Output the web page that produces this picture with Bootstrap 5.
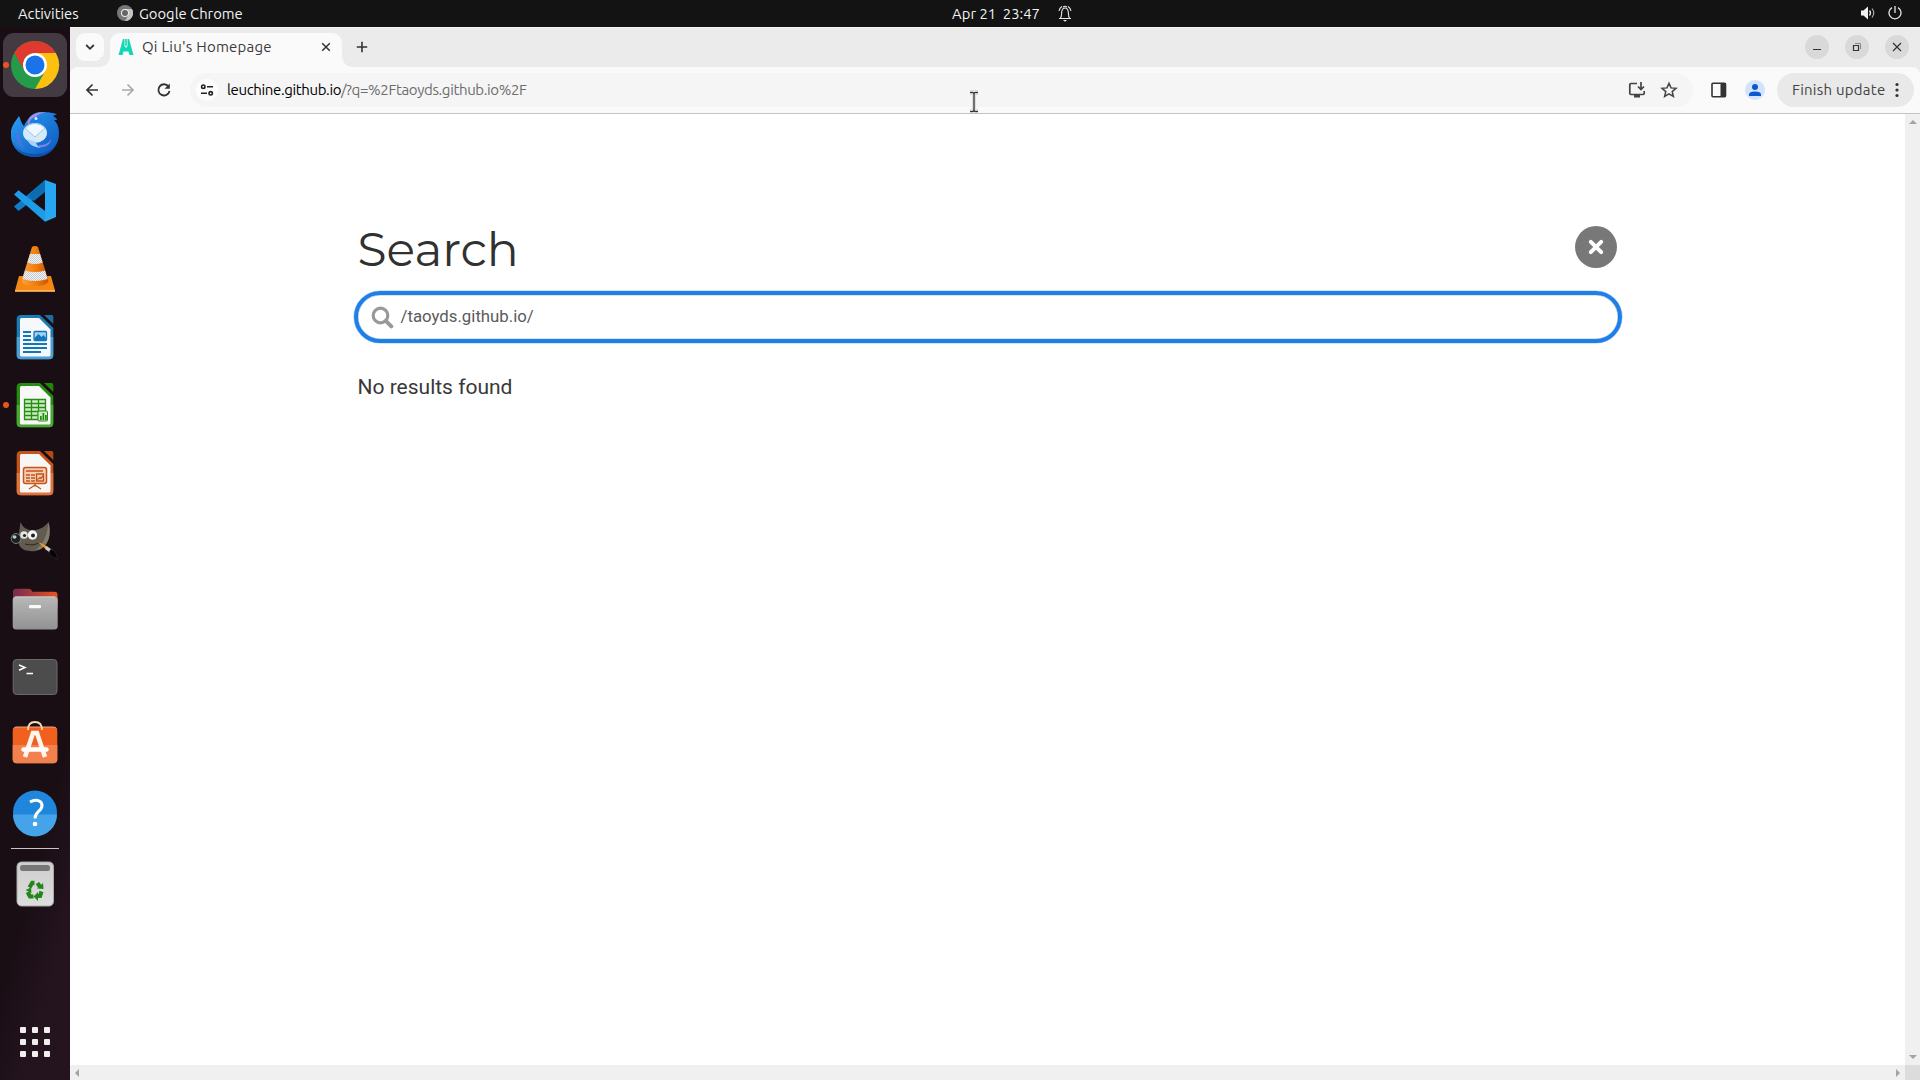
<!DOCTYPE html>
<html lang="en">
<head>
<meta charset="utf-8">
<meta name="viewport" content="width=device-width, initial-scale=1">
<title>Qi Liu's Homepage</title>
<link href="https://cdn.jsdelivr.net/npm/bootstrap@5.3.0/dist/css/bootstrap.min.css" rel="stylesheet">
<style>
body{width:1920px;height:1080px;overflow:hidden;background:#fff;font-family:Ubuntu,"Noto Sans",sans-serif;font-size:15px;line-height:1}
svg{display:block;flex:none}
.topbar{height:27px;background:#131313;color:#f2f2f2;padding:0 18px 1px 18px;font-size:14.8px}
.topbar>div{flex:1 1 0}
.topbar span{padding-top:2px}
.t-act{width:95px}
.t-app{margin-left:6px}
.clock{padding-left:104px;gap:18px}
.t-clock{white-space:pre}
.dock{width:70px;background:linear-gradient(105deg,#1a0e15 0 74%,#24141e 88%);padding-top:6px;position:relative}
.tile{width:64px;height:64px;margin-bottom:4px;border-radius:11px;position:relative}
.tile.on{background:#443a41}
.run::before{content:"";position:absolute;left:0;top:29px;width:6px;height:6px;border-radius:50%;background:#e95420}
.sep{width:48px;height:1px;background:#c9c5c7;margin-top:-1px;margin-bottom:3px}
.apps{margin-top:107px}
.strip{height:40px;background:#ebebeb;padding:5px 11px 0 6px;border-top:1px solid #f6f6f6}
.tabsearch{width:28px;height:28px;border-radius:9px;background:#fafafa;margin-right:6px}
.tab{width:232px;height:34px;background:#fafafa;border-radius:10px 10px 0 0;padding:0 11px 6px 8px;color:#3c3c3c;position:relative}
.tab::before,.tab::after{content:"";position:absolute;bottom:0;width:10px;height:10px}
.tab::before{left:-10px;background:radial-gradient(circle at 0 0,#ebebeb 9.5px,#fafafa 10px)}
.tab::after{right:-10px;background:radial-gradient(circle at 100% 0,#ebebeb 9.5px,#fafafa 10px)}
.t-tab{margin-left:8px;letter-spacing:.23px;padding-bottom:2px}
.winbtns{gap:16px;margin-top:2px}
.winbtn{width:24px;height:24px;border-radius:50%;background:#d9d9d9}
.barwrap{background:#ebebeb}
.bar{height:47px;background:#fafafa;border-bottom:1px solid #c4c4c4;border-radius:8px 8px 0 0;padding:6px 6px 6px 10px}
.ib{width:24px;height:24px}
.omni{width:1503px;height:34px;border-radius:17px;background:#f5f5f5;padding:0 15px 0 6px}
.tune{width:22px;height:22px;border-radius:50%;background:#fdfdfd}
.url{color:#6d6d6d;margin-left:9px;letter-spacing:-.36px;padding-bottom:2px}
.url b{font-weight:400;color:#000}
.upd{width:137px;height:34px;border-radius:17px;background:#e9e9e9;color:#444;padding:0 12px 0 15px}
.t-upd{letter-spacing:.25px;padding-bottom:1px}
.page{font-family:Roboto,sans-serif;color:#383838}
.inner{width:1260px;margin:0 auto;padding-top:107px}
.inner h1{font-family:Montserrat,Inter,sans-serif;font-weight:400;font-size:47.25px;line-height:56px;margin:0;color:#313131}
.closebtn{width:42px;height:42px;border-radius:50%;background:#787878;margin:5px .5px 0 0}
.searchbox{width:1268px;height:52px;margin:14px -4px 0 -4px;border:4px solid #1f7fe8;border-radius:26px;box-shadow:0 0 0 .6px #a9cef6,inset 0 0 0 .6px #b9c7d6;font-size:16.8px;color:#5a5a5a;padding-left:13px}
.query{margin-left:7px;padding-bottom:2px}
.none{font-size:21px;line-height:24px;margin:32px 0 0}
.vs{width:15px;background:#f0f0f0}
.hs{height:15px;background:#f0f0f0}
.corner{width:15px;height:15px;background:#dcdcdc}
.cursor{position:absolute;left:968px;top:90px}
</style>
<script src="https://cdn.jsdelivr.net/npm/bootstrap@5.3.0/dist/js/bootstrap.bundle.min.js"></script>
</head>
<body class="d-flex flex-column">
<header class="topbar d-flex align-items-center">
  <div class="d-flex align-items-center">
    <span class="t-act">Activities</span>
    <svg class="ms-1" width="16" height="16" viewBox="0 0 16 16"><circle cx="8" cy="8" r="8" fill="#777"/><path d="M8 4h7A8 8 0 0 1 8 16l3.500-6z" fill="#c4c4c4"/><circle cx="8" cy="8" r="4" fill="#eee"/><circle cx="8" cy="8" r="3" fill="#666"/></svg>
    <span class="t-app">Google Chrome</span>
  </div>
  <div class="d-flex align-items-center justify-content-center clock">
    <span class="t-clock">Apr 21  23:47</span>
    <svg width="14" height="17" viewBox="0 0 14 17" fill="none" stroke="#e8e8e8" stroke-width="1.100"><path d="M1 13.500h12M2.500 13c1.500-2 .8-4 1.300-6.500C4.200 4.300 5.500 3 7 3s2.800 1.300 3.200 3.500c.5 2.500-.2 4.500 1.300 6.500M1 6c.3-2 1.500-3.700 3-4.500M13 6c-.3-2-1.500-3.700-3-4.500M5 2.200c1.200-1.200 2.800-1.200 4 0"/><path d="M5 15h4l-2 1.800z" fill="#eee" stroke="none"/></svg>
  </div>
  <div class="d-flex align-items-center justify-content-end">
    <svg class="me-2" width="16" height="16" viewBox="0 0 16 16" fill="none" stroke="#eee"><path d="M1 5.500h2.500L8 1.500v13l-4.500-4H1z" fill="#f2f2f2" stroke="none"/><path d="M9.500 5.500q2 2.500 0 5" stroke-width="1.300"/><path d="M12 3.500q3.500 4.500 0 9" stroke="#aaa" stroke-width="1.200"/></svg>
    <svg class="ms-1" width="14" height="14" viewBox="0 0 14 14" fill="none" stroke="#e8e8e8" stroke-width="1.300"><path d="M4 1.600a6 6 0 1 0 6 0M7 0v7"/></svg>
  </div>
</header>
<main class="d-flex flex-grow-1">
  <nav class="dock d-flex flex-column align-items-center flex-shrink-0">
    <svg width="0" height="0" class="position-absolute"><defs>
      <linearGradient id="tb" x2="1" y2="1"><stop stop-color="#2aa0f5"/><stop offset="1" stop-color="#0d55bd"/></linearGradient>
      <linearGradient id="cone"><stop stop-color="#f9a13a"/><stop offset=".5" stop-color="#f38010"/><stop offset="1" stop-color="#c95500"/></linearGradient>
      <linearGradient id="grey" x2="0" y2="1"><stop stop-color="#b8b8b8"/><stop offset="1" stop-color="#929292"/></linearGradient>
      <linearGradient id="fold"><stop stop-color="#762a50"/><stop offset="1" stop-color="#e95420"/></linearGradient>
      <linearGradient id="bin" x2="0" y2="1"><stop stop-color="#cecece"/><stop offset="1" stop-color="#dedede"/></linearGradient>
      <pattern id="chk" width="2" height="2" patternUnits="userSpaceOnUse"><path d="M0 0h2v2H0z" fill="#f3f3f3"/><path d="M0 0h1v1H0zM1 1h1v1H1z" fill="#c5c9cc"/></pattern>
    </defs></svg>
    <div class="tile on run"><svg width="64" height="64"><circle cx="32" cy="32" r="24" fill="#259b4a"/><path d="M32 20h20.800A24 24 0 0 1 32 56l10.400-18z" fill="#fcc010"/><path d="M11.200 20A24 24 0 0 1 52.800 20H32a12 12 0 0 0-10.400 18z" fill="#e0392d"/><circle cx="32" cy="32" r="12" fill="#fff"/><circle cx="32" cy="32" r="9.500" fill="#1a73e8"/></svg></div>
    <div class="tile"><svg width="64" height="64"><path d="M8 30c1-6 4-9 8-15 2 4 2 7 5 10 4-8 8-14 18-14 7 0 11 1 15 2l-4 2c2 1 4 3 4 4l-3 0c4 4 5 8 5 14 0 13-11 23-24 23C18 56 8 47 8 34z" fill="url(#tb)"/><path d="M10 38c1 10 10 15 22 15 10 0 19-4 22-12-3 10-12 15-22 15-13 0-21-8-22-18z" fill="#0a4aa5" opacity=".7"/><path d="M25 24c-2-7 8-15 18-12-6 0-9 2-11 5-2 4-4 5-7 7z" fill="#a98ee8"/><path d="M27 20c3-5 11-6 15 0l-7 7-9-2z" fill="#1c7ee0"/><circle cx="33" cy="17.500" r="1.500" fill="#dcecff"/><path d="M15 28c-3 8-1 16 6 20-3-7-5-12-6-20z" fill="#5a6fe0" opacity=".8"/><path d="M36 44c6 0 10-2 12-6 0 5-5 9-12 8z" fill="#7b82e8"/><ellipse cx="32" cy="32" rx="12" ry="10" fill="#d3e9fc"/><path d="M24 38c2 6 7 8 14 9-4-2-5-4-5-6z" fill="#a9d2fa"/><path d="M22 27l10 9 10-9q-4-4.500-10-4.500T22 27z" fill="#f0f8ff" stroke="#a5c4e0" stroke-width="1"/></svg></div>
    <div class="tile"><svg width="64" height="64"><path d="M11 37.500L15.500 42 42 22V11z" fill="#0f7cc5"/><path d="M11 25.500L15.500 21.300 42 42v10.700z" fill="#1f9ce8"/><path d="M42 11l11 4v33l-11 4.700z" fill="#27a7f2"/><path d="M42 11v12L31 32l-6-5z" fill="#0a6cb1"/></svg></div>
    <div class="tile"><svg width="64" height="64"><path d="M16 39h32l4 14.500q0 1-1 1H13q-1 0-1-1z" fill="#f58713"/><path d="M12 53h40v1.700H12z" fill="#ffb258"/><path d="M29 10q3-2 6 0l10.500 34q-1 5-13.500 5t-13.500-5z" fill="url(#cone)"/><path d="M27 17h10l2.700 8.500q-7.700 3-15.400 0z" fill="url(#chk)"/><path d="M22 33.500q10 3 20 0l2.500 8.500q-12.500 4-25 0z" fill="url(#chk)"/></svg></div>
    <div class="tile"><svg width="64" height="64"><path d="M41 10h7.500q1.800 0 1.800 1.800V19z" fill="#1c6fa3"/><path d="M18 10h19l13.300 13v27q0 4.300-4.300 4.300H18q-4.300 0-4.300-4.300V14.300Q13.700 10 18 10z" fill="#1b7bb5"/><path d="M13.700 32h36.600v18q0 4.300-4.300 4.300H18q-4.300 0-4.300-4.300z" fill="#4b9fd2"/><path d="M18.500 13H36l11.500 11.500V50q0 1.500-1.500 1.500H18.500q-1.500 0-1.500-1.500V14.500q0-1.500 1.500-1.500z" fill="#f7f8f9"/><path d="M20 27h8M20 31h8M20 35h8M20 39h24M20 43h24M20 47h18" stroke="#1177bb" stroke-width="1.800"/><rect x="31" y="26.500" width="12.500" height="9" rx="1" fill="#9ed2f2" stroke="#1177bb" stroke-width="1.300"/><path d="M31.500 35v-2l4-4 3 3 2-2 2.500 3v2z" fill="#1177bb"/></svg></div>
    <div class="tile run"><svg width="64" height="64"><path d="M41 10h7.500q1.800 0 1.800 1.800V19z" fill="#20860b"/><path d="M18 10h19l13.300 13v27q0 4.300-4.300 4.300H18q-4.300 0-4.300-4.300V14.300Q13.700 10 18 10z" fill="#268c12"/><path d="M13.700 32h36.600v18q0 4.300-4.300 4.300H18q-4.300 0-4.300-4.300z" fill="#48a832"/><path d="M18.500 13H36l11.500 11.500V50q0 1.500-1.500 1.500H18.500q-1.500 0-1.500-1.500V14.500q0-1.500 1.500-1.500z" fill="#f7f8f7"/><path d="M21.500 26.500h21v20h-21zM21.500 30.500h21M21.500 34.500h21M21.500 38.500h21M21.500 42.500h21M28.500 26.500v20M35.500 26.500v20" fill="#c9ecc0" stroke="#268c12" stroke-width="1.300"/><rect x="35" y="38" width="9.500" height="10" rx="1" fill="#c9ecc0" stroke="#268c12"/><path d="M37 47v-4h1.700v4zm2.500 0v-7h1.700v7zm2.500 0v-5h1.700v5z" fill="#268c12"/></svg></div>
    <div class="tile"><svg width="64" height="64"><path d="M41 10h7.500q1.800 0 1.800 1.800V19z" fill="#b84a12"/><path d="M18 10h19l13.300 13v27q0 4.300-4.300 4.300H18q-4.300 0-4.300-4.300V14.300Q13.700 10 18 10z" fill="#c4541a"/><path d="M13.700 32h36.600v18q0 4.300-4.300 4.300H18q-4.300 0-4.300-4.300z" fill="#dc7440"/><path d="M18.500 13H36l11.500 11.500V50q0 1.500-1.500 1.500H18.500q-1.500 0-1.500-1.500V14.500q0-1.500 1.500-1.500z" fill="#f8f6f5"/><rect x="20.500" y="26.500" width="23" height="16" rx="2" fill="#f5cdb5" stroke="#c4541a" stroke-width="1.500"/><path d="M23 30h17M23 34h4M23 37h4M23 40h4M28 34h4M28 37h4M28 40h4" stroke="#c4541a" stroke-width="1.700"/><path d="M33.500 33h7v7h-7zM34.500 38.500l2.500-2 1 1 2-3M32 43v2.500M32 44l-6 4M32 44l6 4" fill="none" stroke="#c4541a" stroke-width="1.300"/></svg></div>
    <div class="tile"><svg width="64" height="64"><path d="M17.500 13c2 5 5 7 9 8 6 1 14-1 19-8 2 8 2 18-4 24-5 6-14 6-20 4-5-2-7-7-6-13z" fill="#625c50"/><path d="M45.500 13c2 8 2 18-4 24-3 3-6 4-9 4 8-6 12-15 13-28z" fill="#837c6d"/><ellipse cx="13" cy="29.500" rx="4.800" ry="5" fill="#1c1f20" stroke="#8b9596" stroke-width=".8"/><ellipse cx="11.500" cy="28" rx="2" ry="1.800" fill="#b9c9c9"/><circle cx="21" cy="26" r="3.800" fill="#e4e4e4"/><circle cx="29.500" cy="26" r="4.700" fill="#f5f5f5"/><circle cx="21.500" cy="26.500" r="1.600" fill="#222"/><circle cx="30" cy="26.500" r="2" fill="#222"/><path d="M22 35q9 2.500 15-2" stroke="#2a2722" fill="none"/><path d="M34.500 32.500l10 5-1.500 3z" fill="#f09a28"/><path d="M43.500 37l6 4-2 3-5.500-4z" fill="#ccc"/><path d="M48 40c3 1 6 4 6.500 10-4-1-8-3-8.500-7z" fill="#050505" stroke="#3a3638" stroke-width=".5"/></svg></div>
    <div class="tile"><svg width="64" height="64"><path d="M10 15q0-3.300 3-3.300h13q1.500 0 2.500 1.500l1 1.500h22q3 0 3 3V30H10z" fill="url(#fold)"/><rect x="9.700" y="19.500" width="45" height="33" rx="3.500" fill="url(#grey)"/><path d="M12 20h40" stroke="#ccc"/><rect x="26" y="28" width="12" height="3.200" rx="1" fill="#fafafa"/></svg></div>
    <div class="tile"><svg width="64" height="64"><rect x="10.200" y="14.500" width="43.800" height="35" rx="3.500" fill="#4c4c4c" stroke="#6a6a6a"/><path d="M16 20l6 2.500-6 2.800M23.500 28.500H30" fill="none" stroke="#fff" stroke-width="1.500"/></svg></div>
    <div class="tile"><svg width="64" height="64"><rect x="9.700" y="14" width="44.600" height="36.300" rx="4" fill="#f2601f"/><path d="M9.700 32h44.600v14.300q0 4-4 4H13.700q-4 0-4-4z" fill="#f2814d"/><path d="M10.500 15.500Q11 14 14 14h36q3 0 3.500 1.500" stroke="#f9a080" fill="none"/><path d="M25 17q0-8 7-8t7 8" fill="none" stroke="#f7dcae" stroke-width="1.800"/><path d="M22 44l8-24h4l8 24" fill="none" stroke="#fff4ee" stroke-width="4.500"/><path d="M20.500 36.500h23" stroke="#fff" stroke-width="4.500" stroke-linecap="round"/></svg></div>
    <div class="tile"><svg width="64" height="64" viewBox="0 .5 64 64"><circle cx="32" cy="32" r="22" fill="#1f86dc"/><path d="M10 34a22 22 0 0 0 44 0z" fill="#45a3ea"/><path d="M27 21.500c6-3.500 12-1.500 12 3.500 0 6-7 5.500-7 13" fill="none" stroke="#fff" stroke-width="3"/><circle cx="32" cy="43.500" r="2.300" fill="#fff"/></svg></div>
    <div class="sep"></div>
    <div class="tile"><svg width="64" height="64"><rect x="14" y="10" width="36.500" height="44" rx="4.500" fill="url(#bin)" stroke="#a9a9a9"/><rect x="17" y="13" width="30" height="6" rx="2.500" fill="#777"/><g fill="none" stroke="#23861c" stroke-width="4.200"><path d="M26.500 35.500l2.800-4.700h2.200M34.500 31l2.500 4"/><path d="M38.500 39.500l-1.500 4.500h-2.500"/><path d="M30.500 44.500h-3.500L24.700 40"/></g><path d="M34 36.500l6.500.5-.5-6zM35 40v9l-4.500-4.500zM22.500 38l5.500-2.500.5 5.500z" fill="#23861c"/></svg></div>
    <svg class="apps" width="30" height="30" fill="#f1efee"><g id="r"><rect width="6" height="6" rx="1"/><rect x="12" width="6" height="6" rx="1"/><rect x="24" width="6" height="6" rx="1"/></g><use href="#r" y="12"/><use href="#r" y="24"/></svg>
  </nav>
  <section class="d-flex flex-column flex-grow-1">
    <div class="strip d-flex align-items-start">
      <div class="tabsearch d-flex align-items-center justify-content-center"><svg width="10" height="10" fill="none" stroke="#333" stroke-width="1.800"><path d="M1.200 3L5 6.800 8.800 3"/></svg></div>
      <div class="tab d-flex align-items-center">
        <svg width="16" height="16" viewBox="0 0 16 16" fill="#12d6b4"><path d="M5 0h1.500v7L8 9l1.500-2V0H11l4.500 16h-4l-1-3.500h-5L4.500 16h-4zM7.200 0h1.600v6.500L8 7.500l-.8-1z"/></svg>
        <span class="t-tab">Qi Liu's Homepage</span>
        <svg class="ms-auto" width="10" height="10" stroke="#333" stroke-width="1.500"><path d="M1.200 1.200l7.600 7.600M8.800 1.200L1.200 8.800"/></svg>
      </div>
      <svg style="margin:8px 0 0 14px" width="12" height="12" stroke="#333" stroke-width="1.600"><path d="M6 .8v10.400M.8 6h10.400"/></svg>
      <div class="winbtns d-flex ms-auto">
        <div class="winbtn"><svg width="24" height="24" stroke="#333" fill="none"><path d="M8 14.500h8"/></svg></div>
        <div class="winbtn"><svg width="24" height="24" stroke="#333" fill="none"><path d="M8.500 10.500h5v5h-5z" stroke-width="1.200"/><path d="M10 8.500h5.500V14" stroke="#888"/></svg></div>
        <div class="winbtn"><svg width="24" height="24" stroke="#333" stroke-width="1.200"><path d="M8 8l8 8M16 8l-8 8"/></svg></div>
      </div>
    </div>
    <div class="barwrap"><div class="bar d-flex align-items-center">
      <svg class="ib" viewBox="0 0 24 24" fill="none" stroke="#333" stroke-width="1.700"><path d="M18 12H7.500M12.500 6.500L7 12l5.500 5.500"/></svg>
      <svg class="ib" style="margin-left:12px" viewBox="0 0 24 24" fill="none" stroke="#aaa" stroke-width="1.700"><path d="M6 12h10.500M11.500 6.500L17 12l-5.500 5.500"/></svg>
      <svg class="ib" style="margin-left:12px" viewBox="0 0 24 24" fill="none" stroke="#333" stroke-width="1.800"><path d="M16.500 8.500A5.600 5.600 0 1 0 17.500 13"/><path d="M17.800 5.500v5.300h-5.300z" fill="#333" stroke="none"/></svg>
      <div class="omni d-flex align-items-center" style="margin-left:14px">
        <div class="tune"><svg width="22" height="22" fill="none" stroke="#222" stroke-width="1.600"><circle cx="7.300" cy="7.700" r="1.700"/><path d="M11 7.700h6M5 14.300h6"/><circle cx="14.700" cy="14.300" r="1.700"/></svg></div>
        <span class="url"><b>leuchine.github.io</b>/?q=%2Ftaoyds.github.io%2F</span>
        <svg class="ms-auto" width="18" height="18" fill="none" stroke="#444" stroke-width="1.700"><path d="M9 2.500H3q-1.200 0-1.200 1.200v8.600q0 1.200 1.200 1.200h12q1.200 0 1.200-1.200V10"/><path d="M6 14h6v2.500H6z" fill="#444" stroke="none"/><path d="M13 1v7M10 5.500l3 3 3-3"/></svg>
        <svg style="margin-left:14px" width="18" height="18" viewBox="0 0 18 18" fill="none" stroke="#444" stroke-width="1.500"><path d="M9 2.300l2 4.600 5 .4-3.800 3.300 1.200 4.900L9 12.900l-4.400 2.600 1.200-4.900L2 7.300l5-.4z"/></svg>
      </div>
      <svg style="margin-left:17px" width="18" height="18" fill="none" stroke="#333" stroke-width="1.600"><rect x="2" y="2.300" width="13.500" height="13.400" rx="1"/><path d="M10.500 2H16v14h-5.500z" fill="#333" stroke="none"/></svg>
      <svg style="margin-left:17px" width="20" height="20"><circle cx="10" cy="10" r="10" fill="#d3e3fd"/><circle cx="10" cy="7" r="3" fill="#0b57d0"/><path d="M4 16v-1.500q0-3 6-3t6 3V16z" fill="#0b57d0"/></svg>
      <div class="upd d-flex align-items-center ms-auto"><span class="t-upd">Finish update</span><svg class="ms-auto" width="10" height="16" fill="#333"><circle cx="5" cy="2.500" r="1.600"/><circle cx="5" cy="8" r="1.600"/><circle cx="5" cy="13.500" r="1.600"/></svg></div>
    </div></div>
    <div class="d-flex flex-grow-1">
      <article class="page flex-grow-1"><div class="inner">
        <div class="d-flex justify-content-between"><h1>Search</h1>
          <div class="closebtn"><svg width="42" height="42" stroke="#fff" stroke-width="4" stroke-linecap="round"><path d="M15.800 15.800l10.400 10.400M26.200 15.800L15.800 26.200"/></svg></div></div>
        <div class="searchbox d-flex align-items-center"><svg width="23" height="23" fill="none" stroke="#999" stroke-width="3.200"><circle cx="9.500" cy="9.500" r="7.300"/><path d="M14.800 14.800l5.500 5.500" stroke-width="4" stroke-linecap="round"/></svg><span class="query">/taoyds.github.io/</span></div>
        <p class="none">No results found</p>
      </div></article>
      <div class="vs d-flex flex-column align-items-center justify-content-between py-1"><svg width="8" height="8" fill="#a3a3a3"><path d="M0 6l4-4 4 4z"/></svg><svg width="8" height="8" fill="#a3a3a3"><path d="M0 2l4 4 4-4z"/></svg></div>
    </div>
    <div class="d-flex"><div class="hs flex-grow-1 d-flex align-items-center justify-content-between px-1"><svg width="8" height="8" fill="#a3a3a3"><path d="M5 0L1 4l4 4z"/></svg><svg width="8" height="8" fill="#a3a3a3"><path d="M3 0l4 4-4 4z"/></svg></div><div class="corner"></div></div>
  </section>
</main>
<svg class="cursor" width="12" height="24" fill="none"><path d="M2 2.500h3l1 1 1-1h3M6 3v18M2 21.500h3l1-1 1 1h3" stroke="#bbb" stroke-width="4"/><path d="M2 2.500h3l1 1 1-1h3M6 3v18M2 21.500h3l1-1 1 1h3" stroke="#fff" stroke-width="3"/><path d="M2 2.500h3l1 1 1-1h3M6 3v18M2 21.500h3l1-1 1 1h3" stroke="#333" stroke-width="1.400"/></svg>
</body>
</html>
